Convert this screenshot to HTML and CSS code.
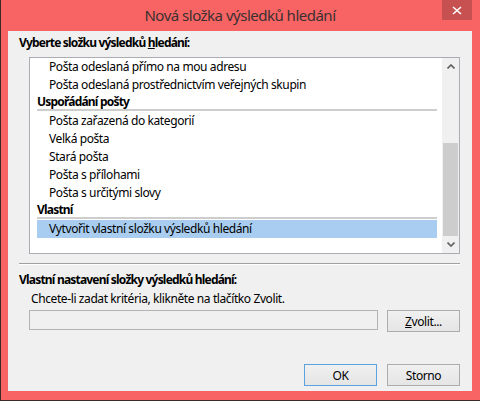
FILE: index.html
```html
<!DOCTYPE html>
<html lang="cs">
<head>
    <meta charset="UTF-8">
    <title>Nová složka výsledků hledání</title>
    <link rel="stylesheet" href="styles.css">
</head>
<body>
    <div class="window">
        <div class="titlebar">
            <span class="title">Nová složka výsledků hledání</span>
            <button class="close" title="Zavřít">
                <svg width="10" height="9" viewBox="0 0 10 9">
                    <path d="M1 1 L9 8 M9 1 L1 8" stroke="#fff" stroke-width="1.6" fill="none"/>
                </svg>
            </button>
        </div>
        <div class="client">
            <div class="group-label">Vyberte složku výsledků <u>h</u>ledání:</div>

            <div class="listbox">
                <ul class="list">
                    <li class="item">Pošta odeslaná přímo na mou adresu</li>
                    <li class="item">Pošta odeslaná prostřednictvím veřejných skupin</li>
                    <li class="group">Uspořádání pošty</li>
                    <li class="item">Pošta zařazená do kategorií</li>
                    <li class="item">Velká pošta</li>
                    <li class="item">Stará pošta</li>
                    <li class="item">Pošta s přílohami</li>
                    <li class="item">Pošta s určitými slovy</li>
                    <li class="group">Vlastní</li>
                    <li class="item selected">Vytvořit vlastní složku výsledků hledání</li>
                </ul>
                <div class="scrollbar">
                    <span class="arrow">
                        <svg width="8" height="5" viewBox="0 0 8 5"><path d="M0.5 4.5 L4 1 L7.5 4.5" stroke="#606060" stroke-width="1.6" fill="none"/></svg>
                    </span>
                    <span class="track"><span class="thumb"></span></span>
                    <span class="arrow">
                        <svg width="8" height="5" viewBox="0 0 8 5"><path d="M0.5 0.5 L4 4 L7.5 0.5" stroke="#606060" stroke-width="1.6" fill="none"/></svg>
                    </span>
                </div>
            </div>

            <div class="separator"></div>

            <div class="group-label">Vlastní nastavení složky výsledků hledání:</div>
            <div class="hint">Chcete-li zadat kritéria, klikněte na tlačítko Zvolit.</div>
            <div class="field-row">
                <div class="field"></div>
                <button class="btn"><u>Z</u>volit...</button>
            </div>

            <div class="actions">
                <button class="btn default">OK</button>
                <button class="btn">Storno</button>
            </div>
        </div>
    </div>
</body>
</html>
```

FILE: styles.css
```css
body {
    margin: 0;
    background-color: #f86464;
    font-family: 'Noto Sans', 'Liberation Sans', sans-serif;
    font-size: 12px;
    letter-spacing: -0.4px;
    color: #000;
}
.window {
    width: 480px;
    height: 401px;
    box-sizing: border-box;
    padding: 0 8px 9px 7px;
    border-left: 1px solid #3a2a2a;
    border-bottom: 1px solid #3a2a2a;
    display: flex;
    flex-direction: column;
}
.titlebar {
    height: 31px;
    display: grid;
    grid-template-columns: 1fr auto 1fr;
}
.title {
    grid-column: 2;
    line-height: 30px;
    font-size: 15px;
    letter-spacing: -0.5px;
    color: #3a3030;
}
.close {
    grid-column: 3;
    justify-self: end;
    align-self: start;
    width: 30px;
    height: 20px;
    padding: 0;
    border: none;
    background-color: #c75050;
    display: flex;
    align-items: center;
    justify-content: center;
}
.client {
    flex: 1;
    background-color: #f0f0f0;
    display: flex;
    flex-direction: column;
}
.group-label {
    font-weight: bold;
    letter-spacing: -0.8px;
    line-height: 16px;
    margin: 4px 0 0 11px;
}
.listbox {
    margin: 6px 12px 0 21px;
    height: 197px;
    box-sizing: border-box;
    border: 1px solid #abadb3;
    background-color: #fff;
    display: flex;
}
.list {
    flex: 1;
    list-style: none;
    margin: 0;
    padding: 0 5px 0 7px;
}
.item {
    height: 18px;
    line-height: 18px;
    padding-left: 12px;
    white-space: nowrap;
}
.item.selected {
    background-color: #a8cdf0;
}
.group {
    height: 15px;
    line-height: 15px;
    font-weight: bold;
    letter-spacing: -0.8px;
    border-bottom: 2px solid #cdcdcd;
    margin-bottom: 1px;
}
.scrollbar {
    width: 17px;
    background-color: #f0f0f0;
    display: flex;
    flex-direction: column;
}
.arrow {
    height: 17px;
    display: flex;
    align-items: center;
    justify-content: center;
}
.track {
    flex: 1;
    padding: 68px 1px 0;
}
.thumb {
    display: block;
    height: 93px;
    background-color: #cdcdcd;
}
.separator {
    margin: 9px 12px 0 11px;
    border-top: 1px solid #a0a0a0;
    border-bottom: 1px solid #fff;
}
.client .separator + .group-label {
    margin-top: 7px;
}
.hint {
    line-height: 16px;
    margin: 3px 0 0 23px;
}
.field-row {
    display: flex;
    align-items: flex-start;
    gap: 9px;
    margin: 3px 12px 0 21px;
}
.field {
    flex: 1;
    height: 20px;
    box-sizing: border-box;
    border: 1px solid #b4b4b4;
    background-color: #f0f0f0;
}
.btn {
    width: 73px;
    height: 22px;
    padding: 0;
    box-sizing: border-box;
    border: 1px solid #acacac;
    background: linear-gradient(#f0f0f0, #e5e5e5);
    font-family: inherit;
    font-size: 12px;
    letter-spacing: -0.4px;
    color: #000;
}
.btn.default {
    border-color: #5aa3e0;
}
.actions {
    display: flex;
    justify-content: flex-end;
    gap: 10px;
    margin: 32px 12px 0 0;
}
```
